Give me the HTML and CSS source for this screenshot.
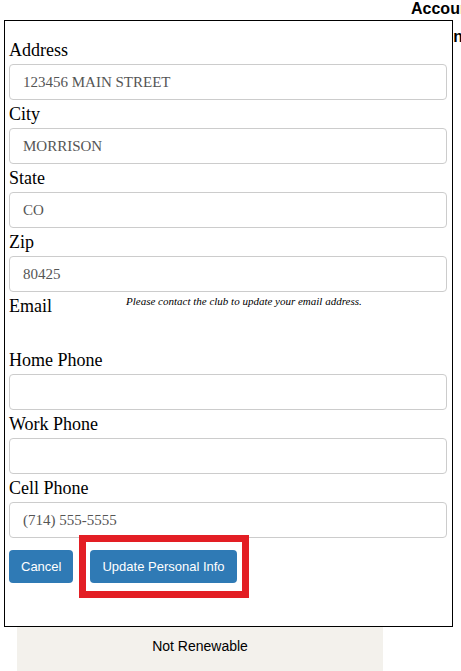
FILE: index.html
```html
<!DOCTYPE html>
<html lang="en">
<head>
<meta charset="utf-8">
<title>Update Personal Info</title>
<link rel="stylesheet" href="styles.css">
</head>
<body>
<div class="page">
  <div class="page-head">
    <span class="head-line1">Account</span>
    <span class="head-line2">Information</span>
  </div>
  <div class="renew-box">Not Renewable</div>
</div>

<div class="modal">
  <form class="form">
    <label class="lbl">Address</label>
    <input class="field" type="text" value="123456 MAIN STREET">
    <label class="lbl">City</label>
    <input class="field" type="text" value="MORRISON">
    <label class="lbl">State</label>
    <input class="field" type="text" value="CO">
    <label class="lbl">Zip</label>
    <input class="field" type="text" value="80425">
    <div class="email-row">
      <label class="lbl email-lbl">Email</label>
      <span class="note">Please contact the club to update your email address.</span>
    </div>
    <label class="lbl">Home Phone</label>
    <input class="field" type="text" value="">
    <label class="lbl">Work Phone</label>
    <input class="field" type="text" value="">
    <label class="lbl">Cell Phone</label>
    <input class="field" type="text" value="(714) 555-5555">
    <div class="actions">
      <button type="button" class="btn">Cancel</button>
      <button type="button" class="btn btn-hl">Update Personal Info<span class="hl"></span></button>
    </div>
  </form>
</div>
</body>
</html>
```

FILE: styles.css
```css
html, body {
  margin: 0;
  padding: 0;
  overflow: hidden;
  background: #fff;
  height: 671px;
}

.page {
  font-family: "Liberation Sans", Arial, sans-serif;
  height: 671px;
  overflow: hidden;
}

.page-head {
  font-weight: bold;
  font-size: 16px;
  line-height: 18px;
  white-space: nowrap;
  color: #000;
}
.head-line1 {
  display: block;
  margin-left: 411px;
}
.head-line2 {
  display: block;
  margin-left: 375px;
  margin-top: 10px;
}

.renew-box {
  margin: 554px 0 0 17px;
  width: 366px;
  height: 71px;
  box-sizing: border-box;
  background: #f3f1ec;
  padding-top: 36px;
  text-align: center;
  font-size: 14px;
  line-height: 20px;
  color: #000;
}

.modal {
  position: absolute;
  left: 4px;
  top: 20px;
  width: 449px;
  box-sizing: border-box;
  border: 1px solid #000;
  background: #fff;
  padding: 15px 5px 43px 4px;
}

.form {
  display: flex;
  flex-direction: column;
  margin: 0;
}

.lbl {
  display: block;
  font-family: "Liberation Serif", "Times New Roman", serif;
  font-size: 18px;
  line-height: 28px;
  height: 28px;
  color: #000;
}

.field {
  display: block;
  box-sizing: border-box;
  width: 100%;
  height: 36px;
  margin: 0;
  border: 1px solid #cccccc;
  border-radius: 4px;
  padding: 0 13px;
  font-family: "Liberation Serif", "Times New Roman", serif;
  font-size: 15px;
  color: #555;
  background: #fff;
  outline: none;
}

.email-row {
  display: flex;
  align-items: flex-start;
  height: 54px;
}
.email-lbl {
  flex: none;
  width: 117px;
}
.note {
  margin-top: 3px;
  font-family: "Liberation Serif", "Times New Roman", serif;
  font-style: italic;
  font-size: 11px;
  line-height: 13px;
  color: #000;
}

.actions {
  display: flex;
  gap: 17px;
  margin-top: 12px;
}

.btn {
  height: 33px;
  padding: 0 12px;
  border: none;
  border-radius: 4px;
  background: #2f7ab5;
  color: #fff;
  font-family: "Liberation Sans", Arial, sans-serif;
  font-size: 13px;
  cursor: pointer;
}

.btn-hl {
  position: relative;
}
.hl {
  position: absolute;
  left: -11px;
  right: -12px;
  top: -15px;
  bottom: -15px;
  border: 7px solid #e31e24;
  pointer-events: none;
}
```
